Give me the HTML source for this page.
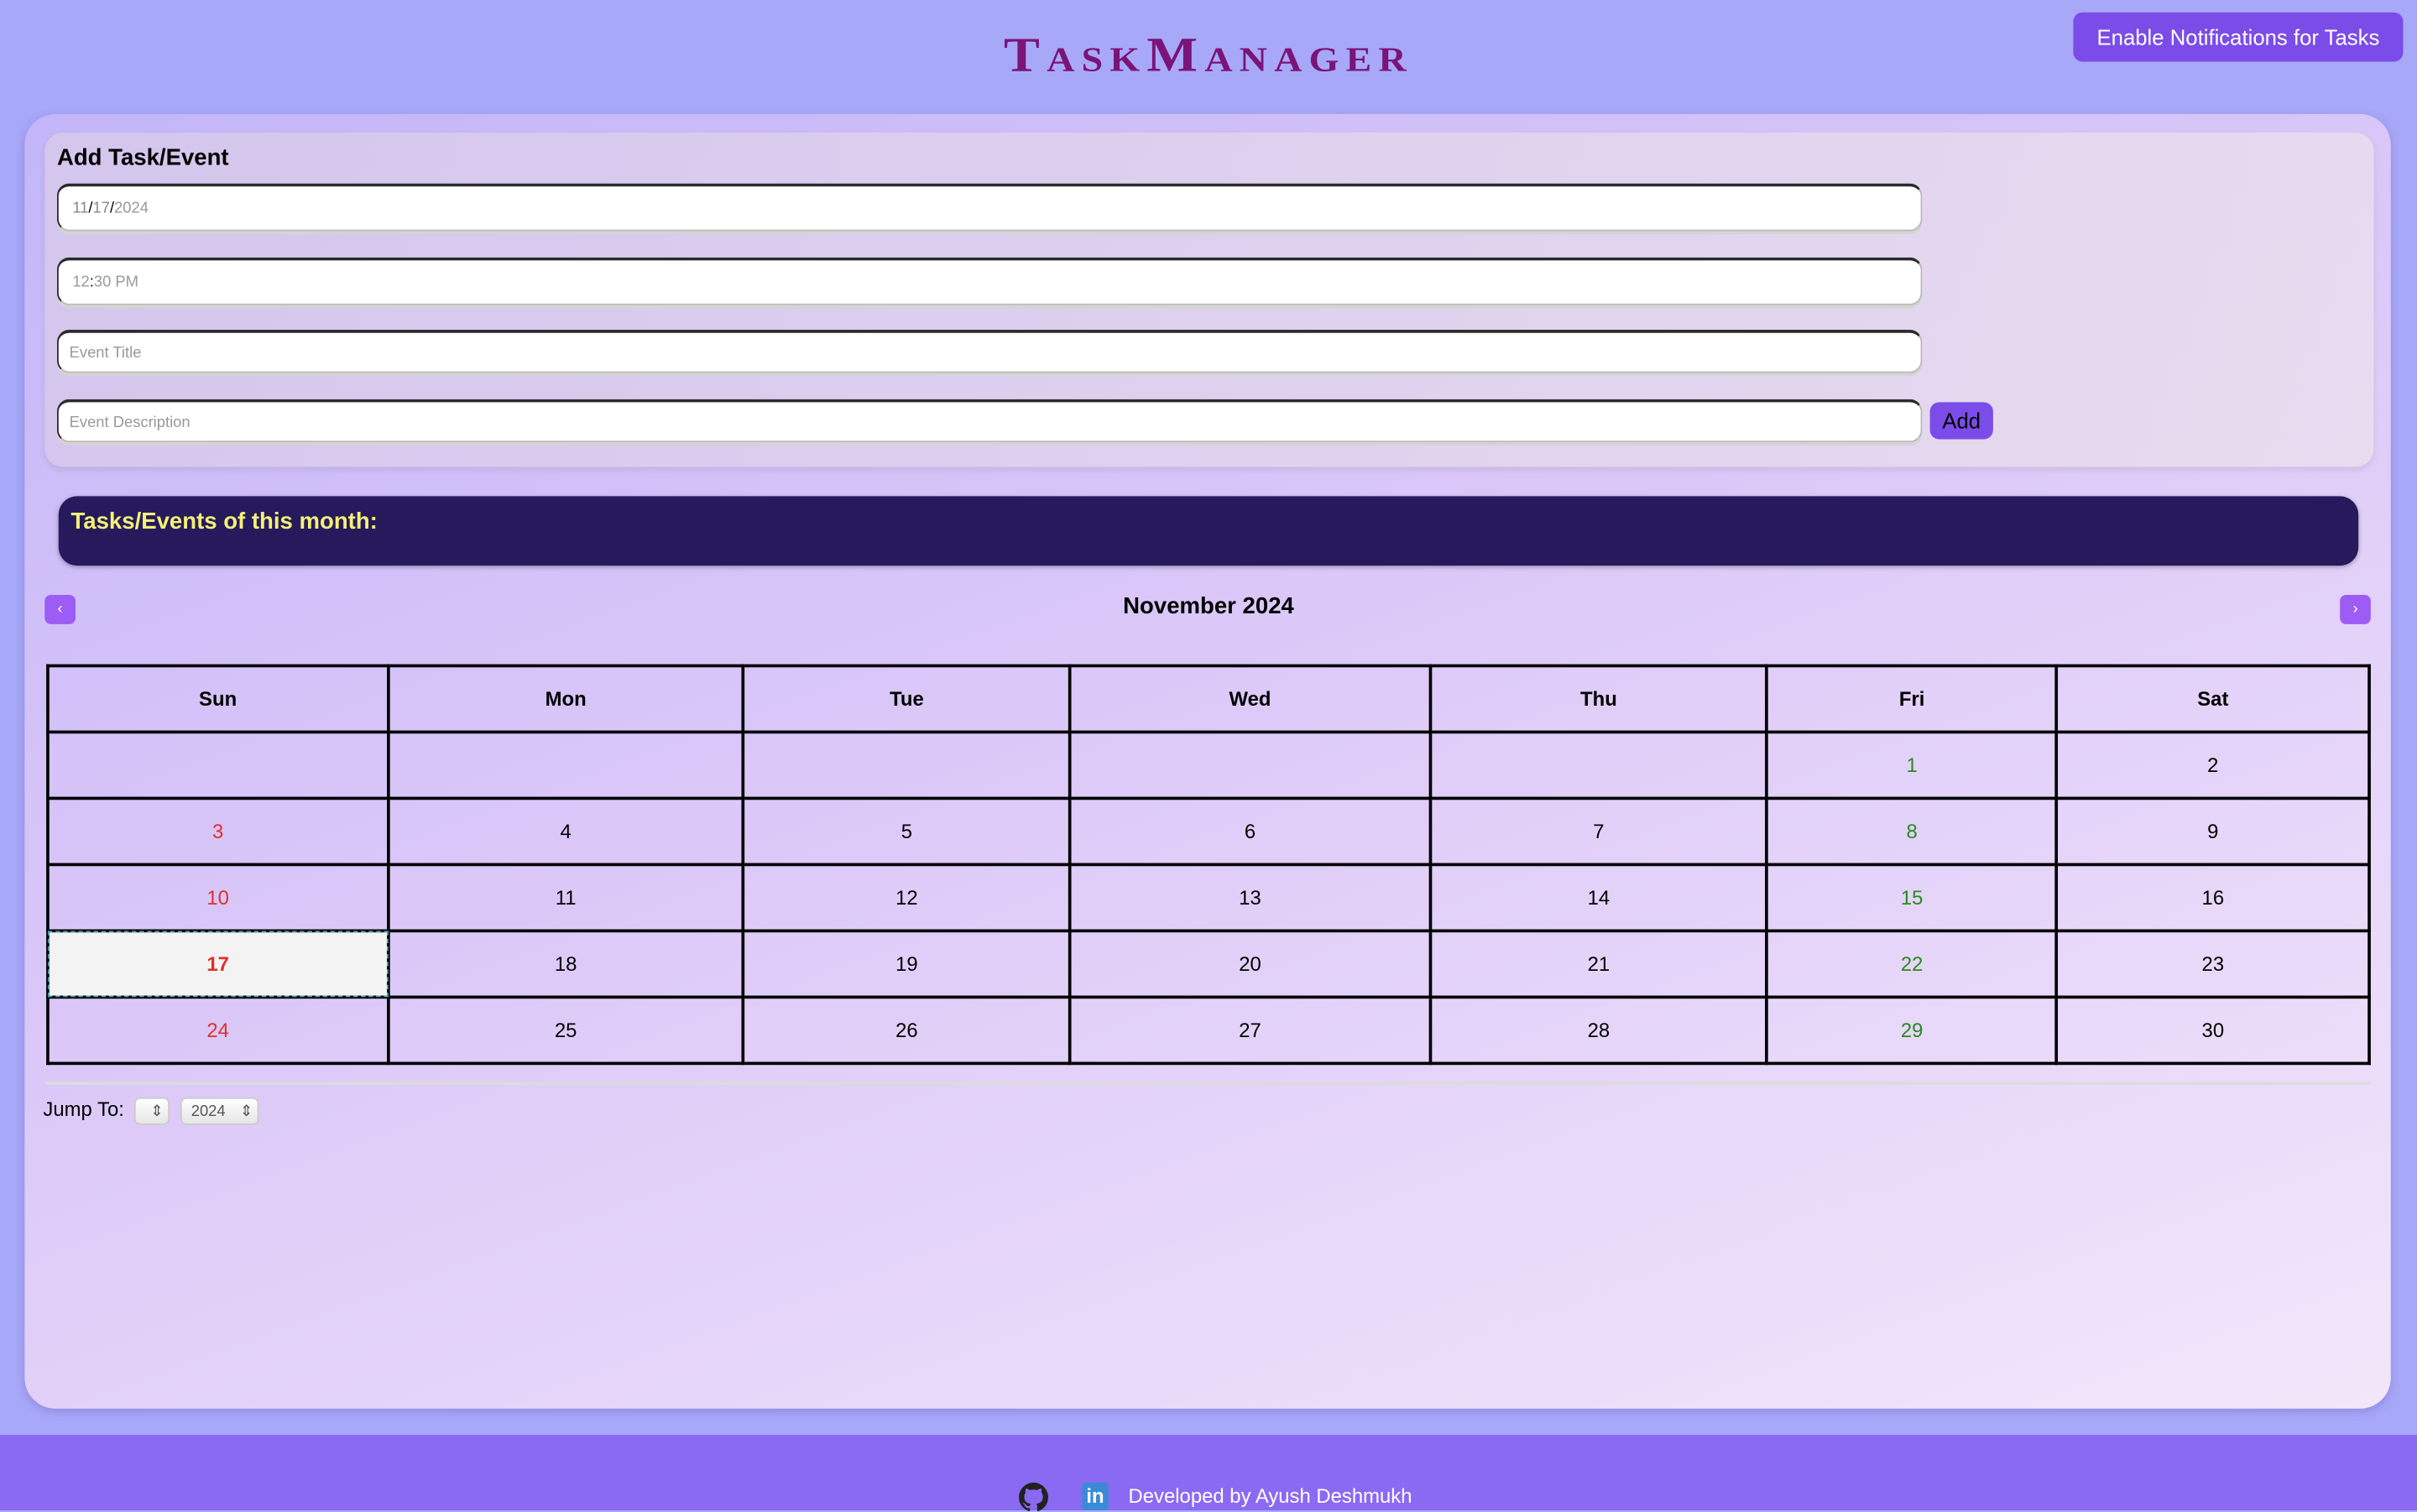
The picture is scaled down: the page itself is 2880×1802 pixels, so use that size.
<!DOCTYPE html>
<html><head><meta charset="utf-8"><style>
html,body{margin:0;padding:0;width:2880px;height:1800px;overflow:hidden;background:#a8a8f8;}
#w{position:absolute;left:0;top:0;width:1568px;height:980px;transform:scale(1.836735);transform-origin:0 0;font-family:"Liberation Sans",sans-serif;}
.a{position:absolute;}
.title{left:0;width:1568px;top:16px;text-align:center;font-family:"Liberation Serif",serif;font-weight:bold;font-variant:small-caps;font-size:35px;color:#7a1478;letter-spacing:4.5px;transform:scaleY(0.9);}
.nbtn{left:1345px;top:8px;width:214px;height:32px;background:#7b4ce8;border-radius:6px;color:#fff;font-size:14px;line-height:32px;text-align:center;}
.card{left:16px;top:74px;width:1535px;height:840px;border-radius:20px;background:linear-gradient(160deg,#c3b6f8 0%,#dcc8f8 45%,#f2e6fa 100%);box-shadow:0 2px 6px rgba(80,60,160,.25);}
.form{left:29px;top:86px;width:1511px;height:217px;border-radius:12px;background:linear-gradient(90deg,rgba(215,200,235,.85),rgba(232,222,238,.85));box-shadow:0 2px 4px rgba(0,0,0,.08);}
.inp{left:37px;width:1210px;background:#fff;border:1px solid #bbb;border-top:2px solid #2a2a2a;border-left:1.5px solid #2a2a2a;border-radius:8px;box-shadow:0 2px 0 #d4d4d4;font-size:10px;color:#999;box-sizing:border-box;padding-left:9px;}
.add{left:1252px;top:261px;width:41px;height:24px;background:#7b4ce8;border-radius:6px;font-size:14px;line-height:24px;text-align:center;color:#000;}
.dark{left:38px;top:322px;width:1492px;height:45px;background:#261a5c;border-radius:12px;box-shadow:0 1px 3px rgba(0,0,0,.3);}
.dark span{position:absolute;left:8px;top:8px;color:#f4f078;font-weight:bold;font-size:15px;}
.nav{top:386px;width:20px;height:19px;background:#9d5cf4;border-radius:4px;color:#fff;font-size:10px;text-align:center;line-height:19px;}
table{position:absolute;left:30px;top:431px;width:1508px;border-collapse:collapse;font-size:13px;}
td,th{border:2px solid #000;height:41px;text-align:center;padding:0;}
.r{color:#e0302a}.g{color:#2a8a20}
.today{background:#f3f3f3;outline:1.5px dashed #4aa0b0;outline-offset:-1px;font-weight:bold;}
.foot{left:0;top:931px;width:1568px;height:49px;background:#8a6af2;}
.sel{top:712px;height:18px;background:linear-gradient(#fff,#e6e6e6);border:1px solid #ccc;border-radius:4px;font-size:10px;color:#555;line-height:18px;box-sizing:border-box;}
</style></head><body><div id="w">
<div class="a title">TaskManager</div>
<div class="a nbtn">Enable Notifications for Tasks</div>
<div class="a card"></div>
<div class="a form"></div>
<div class="a" style="left:37px;top:94px;font-weight:bold;font-size:15px;">Add Task/Event</div>
<div class="a inp" style="top:119px;height:31px;line-height:29px;"><span style="color:#888">11</span><span style="color:#000">/</span><span style="color:#888">17</span><span style="color:#000">/</span>2024</div>
<div class="a inp" style="top:167px;height:31px;line-height:29px;">12<span style="color:#000">:</span>30 PM</div>
<div class="a inp" style="top:214px;height:28px;line-height:27px;padding-left:7px;">Event Title</div>
<div class="a inp" style="top:259px;height:28px;line-height:27px;padding-left:7px;">Event Description</div>
<div class="a add">Add</div>
<div class="a dark"><span>Tasks/Events of this month:</span></div>
<div class="a nav" style="left:29px;">‹</div>
<div class="a nav" style="left:1518px;">›</div>
<div class="a" style="left:0;width:1568px;top:385px;text-align:center;font-weight:bold;font-size:15px;">November 2024</div>
<table>
<colgroup><col style="width:221px"><col style="width:231px"><col style="width:212px"><col style="width:234px"><col style="width:219px"><col style="width:188px"><col style="width:203px"></colgroup>
<tr><th>Sun</th><th>Mon</th><th>Tue</th><th>Wed</th><th>Thu</th><th>Fri</th><th>Sat</th></tr>
<tr><td></td><td></td><td></td><td></td><td></td><td class="g">1</td><td>2</td></tr>
<tr><td class="r">3</td><td>4</td><td>5</td><td>6</td><td>7</td><td class="g">8</td><td>9</td></tr>
<tr><td class="r">10</td><td>11</td><td>12</td><td>13</td><td>14</td><td class="g">15</td><td>16</td></tr>
<tr><td class="r today">17</td><td>18</td><td>19</td><td>20</td><td>21</td><td class="g">22</td><td>23</td></tr>
<tr><td class="r">24</td><td>25</td><td>26</td><td>27</td><td>28</td><td class="g">29</td><td>30</td></tr>
</table>
<div class="a" style="left:29px;top:702px;width:1509px;height:2px;background:#dcdcdc;border-radius:2px;"></div>
<div class="a" style="left:28px;top:712px;font-size:13px;">Jump To:</div>
<div class="a sel" style="left:87px;width:23px;text-align:right;padding-right:3px;">⇕</div>
<div class="a sel" style="left:117px;width:51px;padding-left:6px;">2024 <span style="float:right;padding-right:3px;">⇕</span></div>
<div class="a foot"></div>
<svg class="a" style="left:661px;top:962px" width="19" height="19" viewBox="0 0 16 16"><path fill="#222" d="M8 0C3.58 0 0 3.58 0 8c0 3.54 2.29 6.53 5.47 7.59.4.07.55-.17.55-.38v-1.34c-2.23.48-2.7-1.07-2.7-1.07-.36-.92-.89-1.17-.89-1.17-.73-.5.05-.49.05-.49.8.06 1.23.83 1.23.83.71 1.23 1.87.87 2.33.66.07-.52.28-.87.51-1.07-1.78-.2-3.64-.89-3.64-3.95 0-.87.31-1.59.82-2.15-.08-.2-.36-1.02.08-2.12 0 0 .67-.21 2.2.82a7.6 7.6 0 0 1 4 0c1.53-1.04 2.2-.82 2.2-.82.44 1.1.16 1.92.08 2.12.51.56.82 1.27.82 2.15 0 3.07-1.87 3.75-3.65 3.95.29.25.54.73.54 1.48v2.2c0 .21.15.46.55.38A8.01 8.01 0 0 0 16 8c0-4.42-3.58-8-8-8z"/></svg>
<div class="a" style="left:702px;top:962px;width:17px;height:18px;background:#3a8ad8;color:#fff;font-weight:bold;font-size:13px;line-height:18px;text-align:center;border-radius:2px;">in</div>
<div class="a" style="left:732px;top:963px;color:#fff;font-size:13px;">Developed by Ayush Deshmukh</div>
</div></body></html>
